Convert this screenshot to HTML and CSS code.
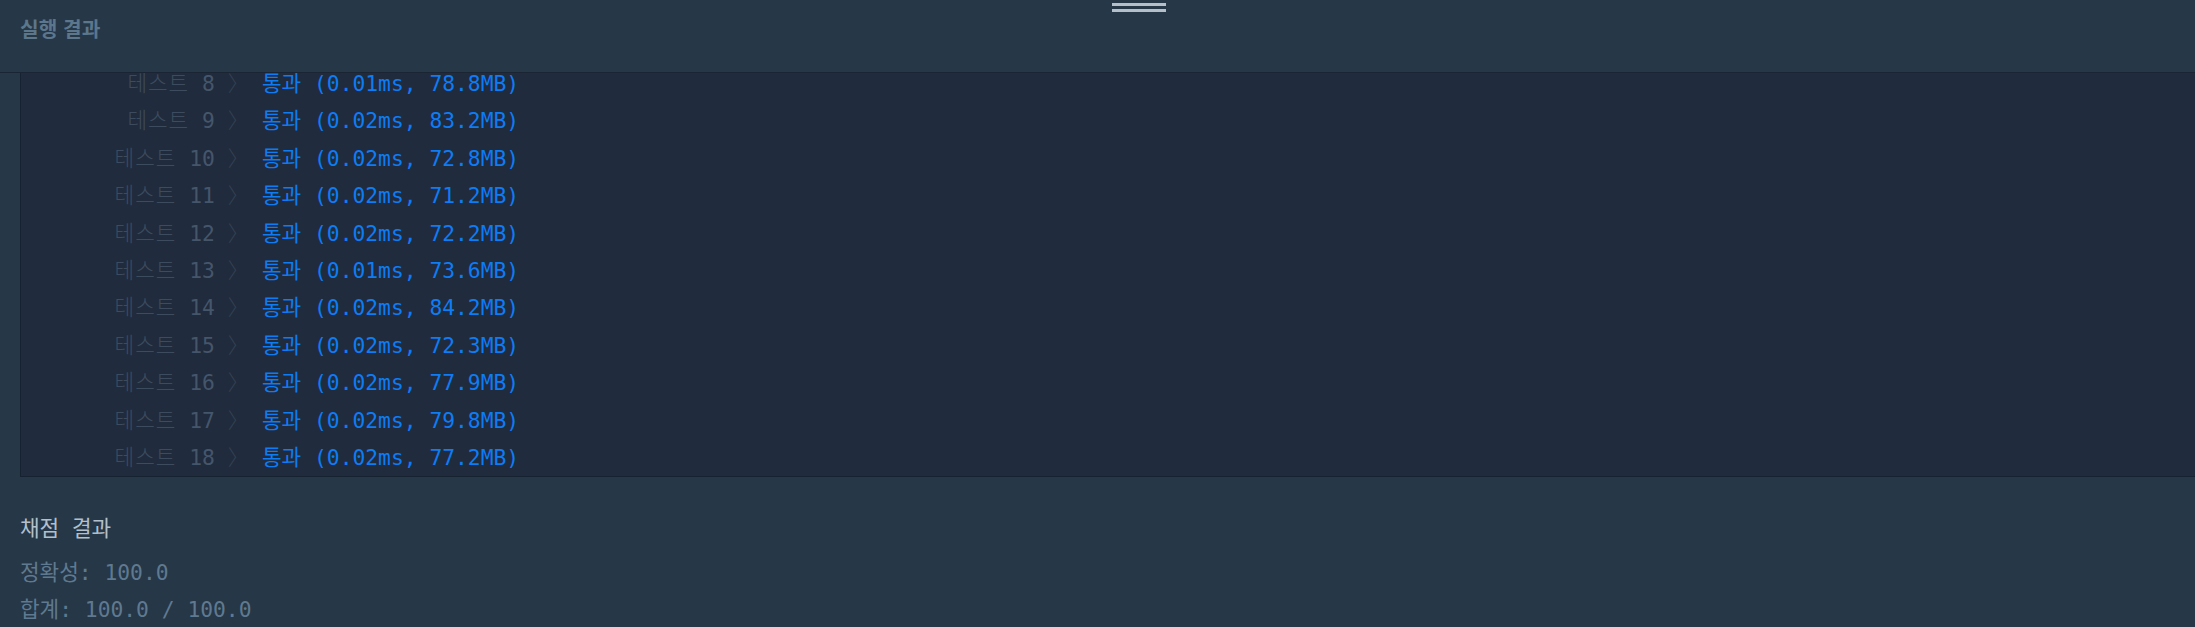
FILE: index.html
```html
<!DOCTYPE html>
<html lang="ko">
<head>
<meta charset="utf-8">
<title>실행 결과</title>
<link rel="stylesheet" href="styles.css">
</head>
<body>
<div class="panel">
  <div class="handle"><span></span><span></span></div>
  <header class="panel-head">
    <h2 class="panel-title">실행 결과</h2>
  </header>
  <main class="panel-body">
    <div class="console">
      <div class="tests">
        <div class="row"><span class="label"><span class="kw">테스트</span> 8 <span class="sep">〉</span></span><span class="result">통과 (0.01ms, 78.8MB)</span></div>
        <div class="row"><span class="label"><span class="kw">테스트</span> 9 <span class="sep">〉</span></span><span class="result">통과 (0.02ms, 83.2MB)</span></div>
        <div class="row"><span class="label"><span class="kw">테스트</span> 10 <span class="sep">〉</span></span><span class="result">통과 (0.02ms, 72.8MB)</span></div>
        <div class="row"><span class="label"><span class="kw">테스트</span> 11 <span class="sep">〉</span></span><span class="result">통과 (0.02ms, 71.2MB)</span></div>
        <div class="row"><span class="label"><span class="kw">테스트</span> 12 <span class="sep">〉</span></span><span class="result">통과 (0.02ms, 72.2MB)</span></div>
        <div class="row"><span class="label"><span class="kw">테스트</span> 13 <span class="sep">〉</span></span><span class="result">통과 (0.01ms, 73.6MB)</span></div>
        <div class="row"><span class="label"><span class="kw">테스트</span> 14 <span class="sep">〉</span></span><span class="result">통과 (0.02ms, 84.2MB)</span></div>
        <div class="row"><span class="label"><span class="kw">테스트</span> 15 <span class="sep">〉</span></span><span class="result">통과 (0.02ms, 72.3MB)</span></div>
        <div class="row"><span class="label"><span class="kw">테스트</span> 16 <span class="sep">〉</span></span><span class="result">통과 (0.02ms, 77.9MB)</span></div>
        <div class="row"><span class="label"><span class="kw">테스트</span> 17 <span class="sep">〉</span></span><span class="result">통과 (0.02ms, 79.8MB)</span></div>
        <div class="row"><span class="label"><span class="kw">테스트</span> 18 <span class="sep">〉</span></span><span class="result">통과 (0.02ms, 77.2MB)</span></div>
      </div>
    </div>
    <section class="summary">
      <div class="summary-title">채점 결과</div>
      <div class="summary-line">정확성: 100.0</div>
      <div class="summary-line">합계: 100.0 / 100.0</div>
    </section>
  </main>
</div>
</body>
</html>
```
FILE: styles.css
```css
html, body {
  margin: 0;
  padding: 0;
  width: 100%;
  height: 100%;
  overflow: hidden;
  background: #263747;
}

.panel {
  position: relative;
  height: 627px;
  display: flex;
  flex-direction: column;
  background: #263747;
  overflow: hidden;
}

.handle {
  position: absolute;
  top: 3px;
  left: 1112px;
  width: 54px;
  display: flex;
  flex-direction: column;
  gap: 3px;
  z-index: 2;
}

.handle span {
  display: block;
  height: 3px;
  background: #b4bfc9;
}

.panel-head {
  flex: 0 0 auto;
  height: 56px;
  padding: 16px 20px 0;
  border-bottom: 1px solid #1a2433;
  background: #263747;
  position: relative;
  z-index: 1;
}

.panel-title {
  margin: 0;
  font-family: "Noto Sans CJK KR", "Noto Sans", sans-serif;
  font-weight: 700;
  font-size: 20.3px;
  line-height: 24px;
  color: #5c768c;
}

.panel-body {
  flex: 1 1 auto;
  overflow: hidden;
  padding: 0 0 0 20px;
  font-family: "DejaVu Sans Mono", "Noto Sans CJK KR", monospace;
  font-size: 21.3px;
}

.console {
  margin-top: -8px;
  margin-right: -10px;
  background: #202b3d;
  border: 1px solid #172231;
  border-top: none;
}

.tests {
  display: flex;
  flex-direction: column;
}

.row {
  display: flex;
  height: 37.4px;
  line-height: 37.4px;
  white-space: pre;
}

.label {
  flex: 0 0 228px;
  text-align: right;
  color: #45566b;
}

.label .kw {
  color: #3d4b5e;
  font-weight: 300;
  letter-spacing: 1px;
}

.label .sep {
  color: #334152;
  font-weight: 300;
}

.result {
  padding-left: 13px;
  color: #0d7cf5;
}

.summary {
  padding-top: 33px;
  display: flex;
  flex-direction: column;
}

.summary-title {
  height: 37.4px;
  line-height: 37.4px;
  margin-bottom: 6px;
  color: #b2c0cc;
  white-space: pre;
}

.summary-line {
  height: 37.4px;
  line-height: 37.4px;
  color: #5f7a90;
  white-space: pre;
}
```
